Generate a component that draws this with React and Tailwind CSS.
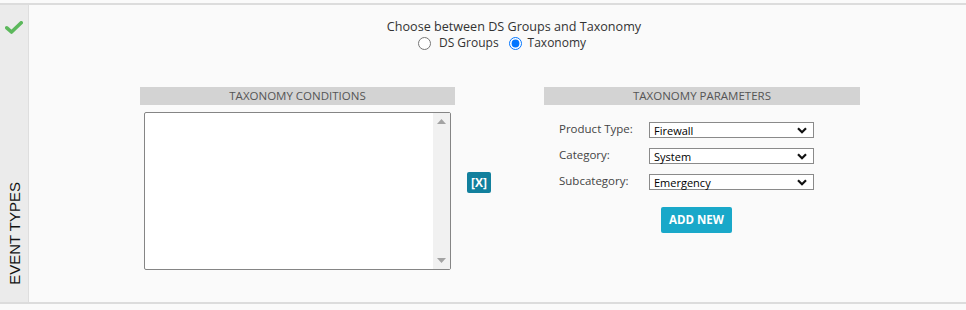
import React from "react";

function FakeSelect({ value }) {
  return (
    <div className="flex h-[16px] w-[165px] items-center justify-between border border-[#8a8a8a] bg-white pl-[4px] pr-[6px] text-[11px] leading-none text-black">
      <span>{value}</span>
      <svg width="10" height="7" viewBox="0 0 10 7">
        <path d="M1 1.2 L5 5.2 L9 1.2" fill="none" stroke="#111" strokeWidth="2.2" />
      </svg>
    </div>
  );
}

export default function App() {
  return (
    <div className="h-[310px] w-[966px] bg-[#fafafa]" style={{ fontFamily: '"Open Sans", "DejaVu Sans", sans-serif' }}>
      <div className="h-[3px] bg-[#fafafa]" />
      <div className="flex h-[301px] border-t-2 border-b-2 border-[#dcdcdc]">
        <div className="flex w-[29px] flex-col items-center justify-between border-r border-[#dedede] bg-[#ebebeb] pt-[16px] pb-[17px]">
          <svg width="18" height="13" viewBox="0 0 18 13">
            <path d="M1.8 6.8 L6.5 11 L16.2 1.8" fill="none" stroke="#5cb85c" strokeWidth="3.6" strokeLinecap="round" strokeLinejoin="round" />
          </svg>
          <div
            className="text-[15px] leading-none text-[#111]"
            style={{ writingMode: "vertical-rl", transform: "rotate(180deg)", fontFamily: '"Liberation Sans", Arial, sans-serif' }}
          >
            EVENT TYPES
          </div>
        </div>
        <div className="flex flex-1 flex-col">
          <div className="flex flex-col items-center pl-[33px] pt-[14px] text-[12px] text-[#333]">
            <div className="text-[12.6px] leading-[16px]">Choose between DS Groups and Taxonomy</div>
            <div className="mr-[24px] flex items-center leading-[16px]">
              <input type="radio" name="g" className="m-0 mr-[8px] h-[13px] w-[13px]" readOnly />
              <span className="mr-[10px]">DS Groups</span>
              <input type="radio" name="g" defaultChecked className="m-0 mr-[6px] h-[13px] w-[13px]" />
              <span>Taxonomy</span>
            </div>
          </div>
          <div className="mt-[36px] flex items-start pl-[111px]">
            <div className="w-[315px]">
              <div className="flex h-[18px] items-center justify-center bg-[#d3d3d3] text-[11.5px] text-[#555]">
                TAXONOMY CONDITIONS
              </div>
              <div className="ml-[4px] mt-[7px] flex h-[158px] w-[307px] rounded-[2px] border border-[#858585] bg-white">
                <div className="flex-1" />
                <div className="flex w-[17px] flex-col items-center justify-between bg-[#f1f1f1] py-[6px]">
                  <svg width="9" height="5" viewBox="0 0 9 5"><path d="M0 5 L4.5 0 L9 5 Z" fill="#a3a3a3" /></svg>
                  <svg width="9" height="5" viewBox="0 0 9 5"><path d="M0 0 L4.5 5 L9 0 Z" fill="#a3a3a3" /></svg>
                </div>
              </div>
            </div>
            <div className="ml-[12px] mt-[85px] flex h-[21px] w-[24px] items-center justify-center rounded-[2px] bg-[#12809d] text-[12px] font-bold text-white">
              [X]
            </div>
            <div className="ml-[53px] w-[316px]">
              <div className="flex h-[18px] items-center justify-center bg-[#d3d3d3] text-[11.5px] text-[#555]">
                TAXONOMY PARAMETERS
              </div>
              <div className="mt-[17px] flex flex-col gap-[10px] pl-[15px]">
                <div className="flex h-[16px] items-center">
                  <span className="mb-[3px] w-[90px] text-[11.5px] leading-none text-[#444]">Product Type:</span>
                  <FakeSelect value="Firewall" />
                </div>
                <div className="flex h-[16px] items-center">
                  <span className="mb-[3px] w-[90px] text-[11.5px] leading-none text-[#444]">Category:</span>
                  <FakeSelect value="System" />
                </div>
                <div className="flex h-[16px] items-center">
                  <span className="mb-[3px] w-[90px] text-[11.5px] leading-none text-[#444]">Subcategory:</span>
                  <FakeSelect value="Emergency" />
                </div>
              </div>
              <div className="ml-[117px] mt-[17px] flex h-[26px] w-[71px] items-center justify-center rounded-[2px] bg-[#19a8c9] text-[11.5px] font-bold text-white">
                ADD NEW
              </div>
            </div>
          </div>
        </div>
      </div>
    </div>
  );
}
